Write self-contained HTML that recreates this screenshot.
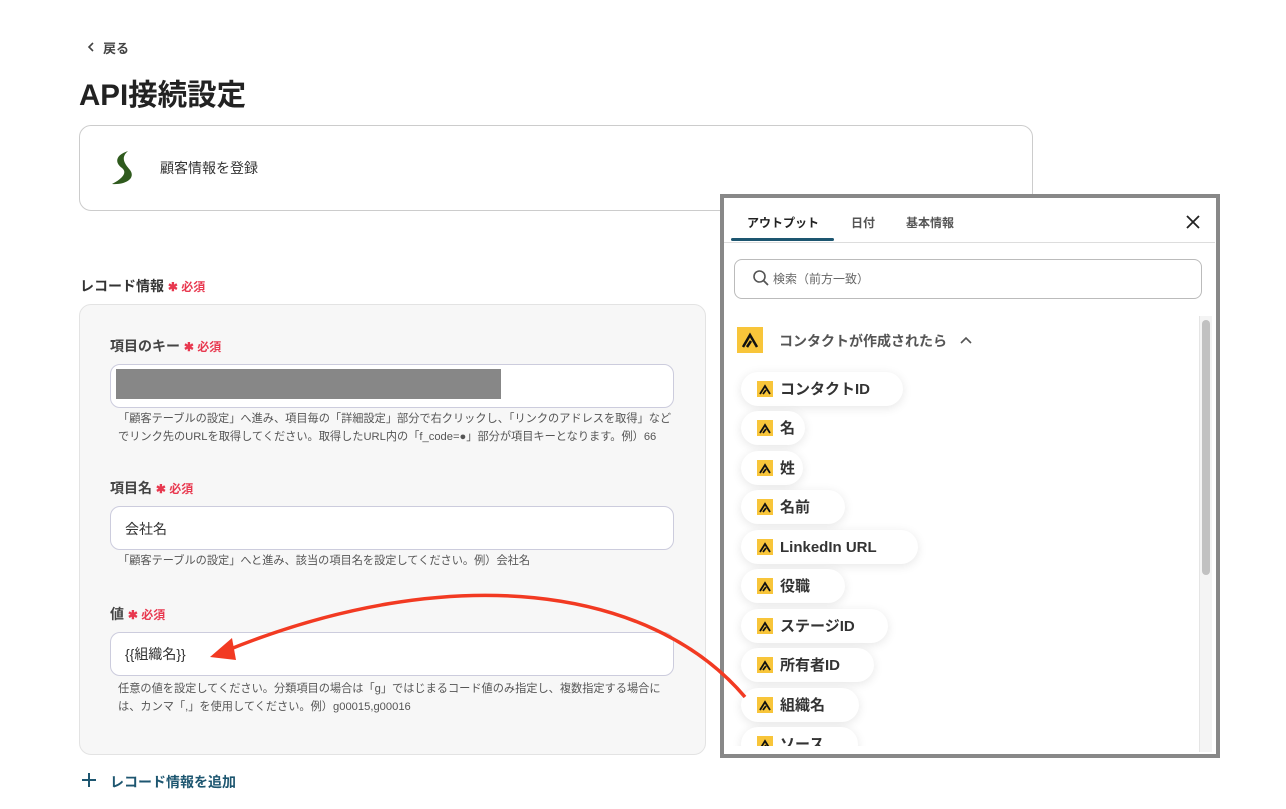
<!DOCTYPE html>
<html><head><meta charset="utf-8"><style>
*{box-sizing:border-box;margin:0;padding:0}
body{width:1286px;height:809px;overflow:hidden;background:#fff;font-family:"Liberation Sans","Noto Sans CJK JP",sans-serif;color:#222;position:relative}
.a{position:absolute}
.req{color:#e8384f;font-size:12px;font-weight:bold}
.lbl{font-size:14px;font-weight:bold;color:#444}
.inp{position:absolute;left:110px;width:564px;height:44px;background:#fff;border:1px solid #ccd;border-radius:10px}
.help{position:absolute;left:118px;font-size:11.2px;color:#555;line-height:18px}
.pill{position:absolute;left:741px;height:34px;border-radius:17px;background:#fff;box-shadow:0 2px 10px rgba(0,0,0,.10);font-size:15px;font-weight:bold;color:#333;line-height:36px;padding-left:39px}
.ic{position:absolute;left:16px;top:9px;width:16px;height:16px;background:#f8c53a}
</style></head><body>
<svg class="a" style="left:86px;top:42px" width="10" height="10"><path d="M7 1L3 5L7 9" stroke="#444" stroke-width="1.6" fill="none"/></svg>
<div class="a" style="left:103px;top:38px;font-size:13px;font-weight:bold;color:#444">戻る</div>
<div class="a" style="left:79px;top:72px;font-size:29.5px;font-weight:bold;color:#222">API接続設定</div>
<div class="a" style="left:79px;top:125px;width:954px;height:86px;border:1px solid #ccc;border-radius:12px"></div>
<svg class="a" style="left:108px;top:150px" width="32" height="36" viewBox="0 0 32 36"><path d="M20 1 C8 5 6 12 14 18 C19 22 16 28 4 34 C18 35 28 28 22 20 C17 14 12 8 20 1Z" fill="#2f5a1d"/></svg>
<div class="a" style="left:160px;top:158px;font-size:14px;color:#333">顧客情報を登録</div>
<div class="a lbl" style="left:80px;top:276px;color:#333">レコード情報 <span class="req">✱ 必須</span></div>
<div class="a" style="left:79px;top:304px;width:627px;height:451px;background:#f7f7f7;border:1px solid #e3e3e3;border-radius:12px"></div>
<div class="a lbl" style="left:110px;top:336px">項目のキー <span class="req">✱ 必須</span></div>
<div class="inp" style="top:364px"></div>
<div class="a" style="left:116px;top:369px;width:385px;height:30px;background:#878787"></div>
<div class="help" style="top:410px">「顧客テーブルの設定」へ進み、項目毎の「詳細設定」部分で右クリックし、「リンクのアドレスを取得」など<br>でリンク先のURLを取得してください。取得したURL内の「f_code=●」部分が項目キーとなります。例）66</div>
<div class="a lbl" style="left:110px;top:478px">項目名 <span class="req">✱ 必須</span></div>
<div class="inp" style="top:506px"></div>
<div class="a" style="left:125px;top:519px;font-size:14px;color:#333">会社名</div>
<div class="help" style="top:552px">「顧客テーブルの設定」へと進み、該当の項目名を設定してください。例）会社名</div>
<div class="a lbl" style="left:110px;top:604px">値 <span class="req">✱ 必須</span></div>
<div class="inp" style="top:632px"></div>
<div class="a" style="left:125px;top:644px;font-size:14px;color:#333">{{組織名}}</div>
<div class="help" style="top:680px">任意の値を設定してください。分類項目の場合は「g」ではじまるコード値のみ指定し、複数指定する場合に<br>は、カンマ「,」を使用してください。例）g00015,g00016</div>
<svg class="a" style="left:82px;top:773px" width="14" height="14"><path d="M7 0V14M0 7H14" stroke="#1d5670" stroke-width="2"/></svg>
<div class="a" style="left:110px;top:772px;font-size:14px;font-weight:bold;color:#1d5670">レコード情報を追加</div>

<div class="a" style="left:720px;top:194px;width:500px;height:564px;border:4px solid #888;background:#fff"></div>
<div class="a" style="left:747px;top:214px;font-size:12px;font-weight:bold;color:#222">アウトプット</div>
<div class="a" style="left:851px;top:214px;font-size:12px;font-weight:bold;color:#555">日付</div>
<div class="a" style="left:906px;top:214px;font-size:12px;font-weight:bold;color:#555">基本情報</div>
<div class="a" style="left:731px;top:238px;width:103px;height:3px;background:#1d5670;border-radius:2px"></div>
<div class="a" style="left:724px;top:242px;width:491px;height:1px;background:#ddd"></div>
<svg class="a" style="left:1185px;top:214px" width="16" height="16"><path d="M2 2L14 14M14 2L2 14" stroke="#222" stroke-width="1.8"/></svg>
<div class="a" style="left:734px;top:259px;width:468px;height:40px;border:1px solid #bbb;border-radius:8px"></div>
<svg class="a" style="left:752px;top:269px" width="18" height="18"><circle cx="7.5" cy="7.5" r="5.5" fill="none" stroke="#555" stroke-width="1.6"/><path d="M11.5 11.5L16 16" stroke="#555" stroke-width="1.8"/></svg>
<div class="a" style="left:773px;top:270px;font-size:12px;color:#666">検索（前方一致）</div>
<div class="a" style="left:737px;top:327px;width:26px;height:26px;background:#f8c53a"><svg width="26" height="26"><path d="M6 20L13 8L20 20M10 20L14 14" stroke="#111" stroke-width="2.5" fill="none"/></svg></div>
<div class="a" style="left:779px;top:331px;font-size:14px;font-weight:bold;color:#555">コンタクトが作成されたら</div>
<svg class="a" style="left:960px;top:335px" width="12" height="10"><path d="M1 8L6 3L11 8" stroke="#555" stroke-width="1.6" fill="none"/></svg>
<div class="a" style="left:1199px;top:316px;width:13px;height:436px;background:#f4f4f4;border-left:1px solid #e5e5e5"></div>
<div class="a" style="left:1202px;top:320px;width:8px;height:255px;background:#c1c1c1;border-radius:4px"></div>

<div class="a" style="left:724px;top:360px;width:474px;height:386px;overflow:hidden">
<div style="position:relative;left:-724px;top:-360px">
<div class="pill" style="top:372px;width:162px"><span class="ic"></span>コンタクトID</div>
<div class="pill" style="top:411px;width:64px"><span class="ic"></span>名</div>
<div class="pill" style="top:451px;width:62px"><span class="ic"></span>姓</div>
<div class="pill" style="top:490px;width:104px"><span class="ic"></span>名前</div>
<div class="pill" style="top:530px;width:177px"><span class="ic"></span>LinkedIn URL</div>
<div class="pill" style="top:569px;width:104px"><span class="ic"></span>役職</div>
<div class="pill" style="top:609px;width:147px"><span class="ic"></span>ステージID</div>
<div class="pill" style="top:648px;width:133px"><span class="ic"></span>所有者ID</div>
<div class="pill" style="top:688px;width:118px"><span class="ic"></span>組織名</div>
<div class="pill" style="top:727px;width:117px"><span class="ic"></span>ソース</div>
</div></div>

<svg class="a" style="left:0;top:0" width="1286" height="809">
<path d="M745 697 C 650 585, 450 560, 228 650" stroke="#f23a22" stroke-width="3.5" fill="none"/>
<path d="M210 657 L232 638 L236 660 Z" fill="#f23a22"/>
</svg>
<script>document.querySelectorAll('.ic').forEach(e=>e.innerHTML='<svg width="16" height="16" style="display:block"><path d="M3 13L8 5L13 13M6 13L9 9" stroke="#111" stroke-width="1.8" fill="none"/></svg>')</script>
</body></html>
